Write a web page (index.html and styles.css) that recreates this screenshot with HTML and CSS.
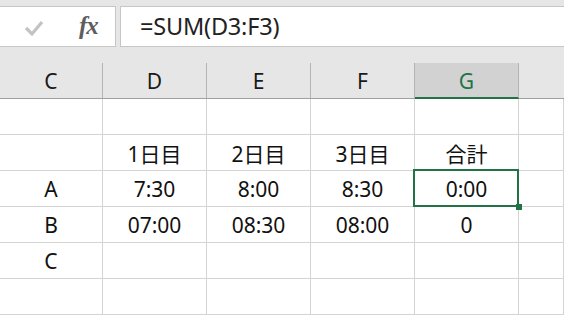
FILE: index.html
```html
<!DOCTYPE html>
<html lang="ja">
<head>
<meta charset="utf-8">
<link rel="stylesheet" href="styles.css">
</head>
<body>
<div class="topbar">
  <div class="namebox">
    <svg class="check" width="20" height="18" viewBox="0 0 20 18"><path d="M2 9 L8 15 L18 3" fill="none" stroke="#c3c3c3" stroke-width="3.2"/></svg>
    <span class="fx">fx</span>
  </div>
  <div class="formula">=SUM(D3:F3)</div>
</div>
<div class="colheads">
  <div class="ch">C</div>
  <div class="ch">D</div>
  <div class="ch">E</div>
  <div class="ch">F</div>
  <div class="ch sel">G</div>
  <div class="ch last"></div>
</div>
<div class="grid">
  <div class="c"></div><div class="c"></div><div class="c"></div><div class="c"></div><div class="c"></div><div class="c"></div>
  <div class="c"></div><div class="c">1日目</div><div class="c">2日目</div><div class="c">3日目</div><div class="c">合計</div><div class="c"></div>
  <div class="c">A</div><div class="c">7:30</div><div class="c">8:00</div><div class="c">8:30</div><div class="c active">0:00<span class="selbox"><span class="handle"></span></span></div><div class="c"></div>
  <div class="c">B</div><div class="c">07:00</div><div class="c">08:30</div><div class="c">08:00</div><div class="c">0</div><div class="c"></div>
  <div class="c">C</div><div class="c"></div><div class="c"></div><div class="c"></div><div class="c"></div><div class="c"></div>
  <div class="c"></div><div class="c"></div><div class="c"></div><div class="c"></div><div class="c"></div><div class="c"></div>
</div>
</body>
</html>
```
FILE: styles.css
```css
html, body {
  margin: 0;
  padding: 0;
  background: #ffffff;
  overflow: hidden;
}
body {
  width: 564px;
  height: 315px;
  font-family: "Noto Sans", "Noto Sans CJK JP", sans-serif;
  color: #111;
}
.topbar {
  background: #e6e6e6;
  height: 57px;
  padding-top: 6px;
  display: flex;
  gap: 4px;
}
.namebox {
  width: 115px;
  height: 39px;
  background: #fff;
  border: 1px solid #c6c6c6;
  border-left: none;
  display: flex;
  align-items: center;
  box-sizing: content-box;
}
.check {
  margin-left: 24px;
  margin-top: 2px;
}
.fx {
  margin-left: 35px;
  font-family: "Liberation Serif", serif;
  font-style: italic;
  font-weight: bold;
  font-size: 25px;
  color: #5e5e5e;
  letter-spacing: -1px;
  margin-top: -1px;
}
.formula {
  flex: 1;
  height: 39px;
  background: #fff;
  border: 1px solid #c6c6c6;
  border-right: none;
  padding-left: 19px;
  font-size: 23.5px;
  line-height: 39px;
  color: #222;
  letter-spacing: -0.2px;
}
.colheads {
  display: grid;
  grid-template-columns: 103px 104px 104px 104px 104px 1fr;
  height: 36px;
  background: #e6e6e6;
  box-sizing: border-box;
  border-bottom: 1px solid #a0a0a0;
}
.ch {
  border-right: 1px solid #b4b4b4;
  display: flex;
  align-items: center;
  justify-content: center;
  font-size: 21px;
  color: #1a1a1a;
  padding-top: 1px;
}
.ch.last { border-right: none; }
.ch.sel {
  background: #d2d2d2;
  color: #217346;
  border-bottom: 2px solid #217346;
  margin-bottom: -1px;
  border-right-color: #b4b4b4;
}
.grid {
  display: grid;
  grid-template-columns: 103px 104px 104px 104px 104px 1fr;
  grid-auto-rows: 36px;
}
.c {
  box-sizing: border-box;
  border-right: 1px solid #d4d4d4;
  border-bottom: 1px solid #d4d4d4;
  display: flex;
  align-items: center;
  justify-content: center;
  font-size: 21px;
  color: #111;
  padding-top: 1px;
}
.c.active { position: relative; }
.selbox {
  position: absolute;
  left: -2px;
  top: -2px;
  right: -1px;
  bottom: -1px;
  border: 2px solid #217346;
}
.handle {
  position: absolute;
  right: -5px;
  bottom: -5px;
  width: 6px;
  height: 6px;
  background: #217346;
}
```
